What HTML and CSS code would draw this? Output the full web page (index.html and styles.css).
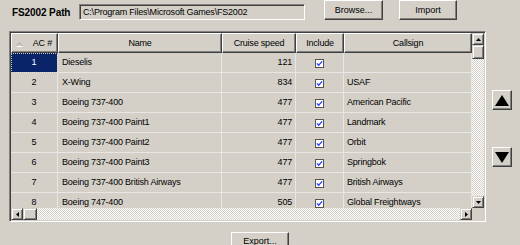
FILE: index.html
```html
<!DOCTYPE html>
<html lang="en">
<head>
    <meta charset="UTF-8">
    <meta name="viewport" content="width=device-width, initial-scale=1.0">
    <title>Aircraft List</title>
    <link rel="stylesheet" href="styles.css">
</head>
<body>
    <div class="path-row">
        <label class="path-label" for="fsPath">FS2002 Path</label>
        <div class="path-input" id="fsPath">C:\Program Files\Microsoft Games\FS2002</div>
        <button class="btn btn-browse">Browse...</button>
        <button class="btn btn-import">Import</button>
    </div>

    <div class="main-row">
        <div class="grid-frame">
            <div class="viewport">
                <div class="head">
                    <div class="cell hcell ac-head">
                        <svg class="sort-icon" width="7" height="5" viewBox="0 0 7 5"><path d="M0.5 4.5 L3.5 0.5 L6.5 4.5" fill="none" stroke="#a8a6a0"/><path d="M0.5 4.5 H6.5" stroke="#ffffff"/></svg>
                        <span>AC #</span>
                    </div>
                    <div class="cell hcell">Name</div>
                    <div class="cell hcell">Cruise speed</div>
                    <div class="cell hcell">Include</div>
                    <div class="cell hcell">Callsign</div>
                </div>

                <div class="row">
                    <div class="cell num sel">1</div>
                    <div class="cell name">Dieselis</div>
                    <div class="cell speed">121</div>
                    <div class="cell inc"><svg width="9" height="9" viewBox="0 0 9 9"><rect x="0.5" y="0.5" width="8" height="8" fill="#fff" stroke="#55534e"/><path d="M2 4.4 L3.6 6.2 L7.2 2.4" fill="none" stroke="#1e3cff" stroke-width="1.3"/></svg></div>
                    <div class="cell call"></div>
                </div>
                <div class="row">
                    <div class="cell num">2</div>
                    <div class="cell name">X-Wing</div>
                    <div class="cell speed">834</div>
                    <div class="cell inc"><svg width="9" height="9" viewBox="0 0 9 9"><rect x="0.5" y="0.5" width="8" height="8" fill="#fff" stroke="#55534e"/><path d="M2 4.4 L3.6 6.2 L7.2 2.4" fill="none" stroke="#1e3cff" stroke-width="1.3"/></svg></div>
                    <div class="cell call">USAF</div>
                </div>
                <div class="row">
                    <div class="cell num">3</div>
                    <div class="cell name">Boeing 737-400</div>
                    <div class="cell speed">477</div>
                    <div class="cell inc"><svg width="9" height="9" viewBox="0 0 9 9"><rect x="0.5" y="0.5" width="8" height="8" fill="#fff" stroke="#55534e"/><path d="M2 4.4 L3.6 6.2 L7.2 2.4" fill="none" stroke="#1e3cff" stroke-width="1.3"/></svg></div>
                    <div class="cell call">American Pacific</div>
                </div>
                <div class="row">
                    <div class="cell num">4</div>
                    <div class="cell name">Boeing 737-400 Paint1</div>
                    <div class="cell speed">477</div>
                    <div class="cell inc"><svg width="9" height="9" viewBox="0 0 9 9"><rect x="0.5" y="0.5" width="8" height="8" fill="#fff" stroke="#55534e"/><path d="M2 4.4 L3.6 6.2 L7.2 2.4" fill="none" stroke="#1e3cff" stroke-width="1.3"/></svg></div>
                    <div class="cell call">Landmark</div>
                </div>
                <div class="row">
                    <div class="cell num">5</div>
                    <div class="cell name">Boeing 737-400 Paint2</div>
                    <div class="cell speed">477</div>
                    <div class="cell inc"><svg width="9" height="9" viewBox="0 0 9 9"><rect x="0.5" y="0.5" width="8" height="8" fill="#fff" stroke="#55534e"/><path d="M2 4.4 L3.6 6.2 L7.2 2.4" fill="none" stroke="#1e3cff" stroke-width="1.3"/></svg></div>
                    <div class="cell call">Orbit</div>
                </div>
                <div class="row">
                    <div class="cell num">6</div>
                    <div class="cell name">Boeing 737-400 Paint3</div>
                    <div class="cell speed">477</div>
                    <div class="cell inc"><svg width="9" height="9" viewBox="0 0 9 9"><rect x="0.5" y="0.5" width="8" height="8" fill="#fff" stroke="#55534e"/><path d="M2 4.4 L3.6 6.2 L7.2 2.4" fill="none" stroke="#1e3cff" stroke-width="1.3"/></svg></div>
                    <div class="cell call">Springbok</div>
                </div>
                <div class="row">
                    <div class="cell num">7</div>
                    <div class="cell name">Boeing 737-400 British Airways</div>
                    <div class="cell speed">477</div>
                    <div class="cell inc"><svg width="9" height="9" viewBox="0 0 9 9"><rect x="0.5" y="0.5" width="8" height="8" fill="#fff" stroke="#55534e"/><path d="M2 4.4 L3.6 6.2 L7.2 2.4" fill="none" stroke="#1e3cff" stroke-width="1.3"/></svg></div>
                    <div class="cell call">British Airways</div>
                </div>
                <div class="row">
                    <div class="cell num">8</div>
                    <div class="cell name">Boeing 747-400</div>
                    <div class="cell speed">505</div>
                    <div class="cell inc"><svg width="9" height="9" viewBox="0 0 9 9"><rect x="0.5" y="0.5" width="8" height="8" fill="#fff" stroke="#55534e"/><path d="M2 4.4 L3.6 6.2 L7.2 2.4" fill="none" stroke="#1e3cff" stroke-width="1.3"/></svg></div>
                    <div class="cell call">Global Freightways</div>
                </div>
            </div>

            <div class="vscroll">
                <div class="sb-btn"><svg width="5" height="3" viewBox="0 0 5 3"><path d="M2.5 0 L5 3 L0 3 Z" fill="#000"/></svg></div>
                <div class="sb-btn v-thumb"></div>
                <div class="track"></div>
                <div class="sb-btn"><svg width="5" height="3" viewBox="0 0 5 3"><path d="M0 0 L5 0 L2.5 3 Z" fill="#000"/></svg></div>
            </div>
            <div class="hscroll">
                <div class="sb-btn"><svg width="3" height="5" viewBox="0 0 3 5"><path d="M0 2.5 L3 0 L3 5 Z" fill="#000"/></svg></div>
                <div class="sb-btn h-thumb"></div>
                <div class="track"></div>
                <div class="sb-btn"><svg width="3" height="5" viewBox="0 0 3 5"><path d="M0 0 L3 2.5 L0 5 Z" fill="#000"/></svg></div>
            </div>
            <div class="corner"></div>
        </div>

        <div class="move-btns">
            <button class="btn btn-move"><svg width="14" height="11" viewBox="0 0 14 11"><path d="M7 0 L14 11 L0 11 Z" fill="#000"/></svg></button>
            <button class="btn btn-move"><svg width="14" height="11" viewBox="0 0 14 11"><path d="M0 0 L14 0 L7 11 Z" fill="#000"/></svg></button>
        </div>
    </div>

    <div class="footer-row">
        <button class="btn btn-export">Export...</button>
    </div>
</body>
</html>
```

FILE: styles.css
```css
body {
    margin: 0;
    background: #d4d0c8;
    font-family: "Liberation Sans", Arial, sans-serif;
    font-size: 9px;
    letter-spacing: -0.2px;
    color: #000;
    overflow: hidden;
}
* {
    box-sizing: border-box;
}

/* raised / sunken classic borders */
.btn {
    background: #d4d0c8;
    border: 1px solid;
    border-color: #fff #404040 #404040 #fff;
    box-shadow: inset -1px -1px #808080;
    font: inherit;
    color: #000;
    padding: 0;
    display: flex;
    align-items: center;
    justify-content: center;
}

.path-row {
    display: flex;
    align-items: flex-start;
    height: 20px;
    padding-left: 12px;
}
.path-label {
    width: 67px;
    margin-top: 7px;
    font-weight: bold;
    font-size: 10px;
    letter-spacing: -0.1px;
}
.path-input {
    width: 226px;
    height: 16px;
    margin-top: 4px;
    padding: 2px 0 0 3px;
    border: 1px solid;
    border-color: #808080 #fff #fff #808080;
    box-shadow: inset 1px 1px #404040;
    white-space: nowrap;
    overflow: hidden;
}
.btn-browse {
    width: 59px;
    height: 20px;
    margin-left: 19px;
}
.btn-import {
    width: 58px;
    height: 20px;
    margin-left: 16px;
}

.main-row {
    display: flex;
    margin: 11px 0 0 9px;
}
.grid-frame {
    width: 477px;
    height: 191px;
    padding: 1px;
    border: 1px solid;
    border-color: #808080 #fff #fff #808080;
    box-shadow: inset 1px 1px #404040;
    display: grid;
    grid-template-columns: 461px 12px;
    grid-template-rows: 175px 12px;
}
.viewport {
    overflow: hidden;
}
.head, .row {
    display: grid;
    grid-template-columns: 47px 164px 74px 48px 128px;
}
.hcell {
    height: 20px;
    border-top: 1px solid #fff;
    border-left: 1px solid #fff;
    border-right: 1px solid #404040;
    border-bottom: 1px solid #404040;
    box-shadow: inset -1px -1px #808080;
    display: flex;
    align-items: center;
    justify-content: center;
    padding-bottom: 1px;
}
.ac-head {
    justify-content: space-between;
    padding: 0 5px 1px 4px;
}
.sort-icon {
    margin-top: 3px;
}
.row {
    height: 20px;
}
.row .cell {
    border-right: 1px solid #e9e7e3;
    border-bottom: 1px solid #e9e7e3;
    display: flex;
    align-items: center;
    padding-bottom: 1px;
    white-space: nowrap;
    overflow: hidden;
}
.num {
    justify-content: center;
}
.name {
    padding-left: 4px;
}
.speed {
    justify-content: flex-end;
    padding-right: 3px;
}
.inc {
    justify-content: center;
    padding-top: 2px;
}
.call {
    padding-left: 3px;
}
.row .sel {
    background: #0a246a;
    color: #fff;
    outline: 1px dotted #c8c4bc;
    outline-offset: -1px;
}

/* scrollbars */
.vscroll, .hscroll {
    display: flex;
}
.vscroll {
    flex-direction: column;
}
.sb-btn {
    width: 12px;
    height: 12px;
    flex: none;
    background: #d4d0c8;
    border: 1px solid;
    border-color: #d4d0c8 #404040 #404040 #d4d0c8;
    box-shadow: inset 1px 1px #fff, inset -1px -1px #808080;
    display: flex;
    align-items: center;
    justify-content: center;
}
.v-thumb {
    height: 14px;
}
.h-thumb {
    width: 14px;
}
.track {
    flex: 1;
    background-color: #fff;
    background-image: repeating-conic-gradient(#d4d0c8 0 25%, #fff 0 50%);
    background-size: 2px 2px;
}
.corner {
    background: #d4d0c8;
}

.move-btns {
    display: flex;
    flex-direction: column;
    gap: 37px;
    padding-top: 59px;
    margin-left: 6px;
}
.btn-move {
    width: 20px;
    height: 20px;
}

.footer-row {
    display: flex;
    justify-content: center;
    margin-top: 10px;
}
.btn-export {
    width: 58px;
    height: 20px;
    align-items: flex-start;
    padding-top: 3px;
}
```
